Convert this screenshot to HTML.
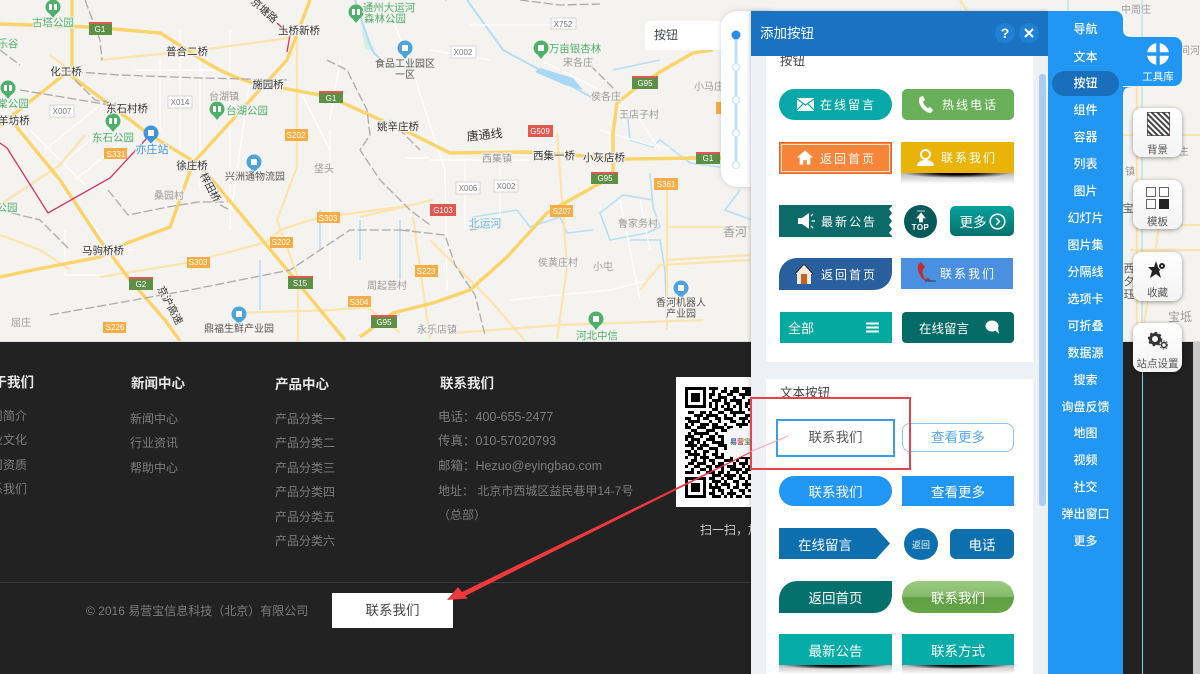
<!DOCTYPE html>
<html lang="zh">
<head>
<meta charset="utf-8">
<title>添加按钮</title>
<style>
html,body{margin:0;padding:0;background:#222}
body{width:1200px;height:674px;overflow:hidden;position:relative;font-family:"Liberation Sans","Noto Sans CJK SC",sans-serif}
.a{position:absolute;box-sizing:border-box}
svg{position:absolute;display:block}
.map text{font-size:10px;fill:#777;paint-order:stroke;stroke:#f5f4f1;stroke-width:2px;text-anchor:middle}
.map .b{fill:#333;font-size:10.5px}
.map .g{fill:#4fae6a;font-size:10.5px}
.map .c{fill:#999;font-size:10px}
.map .s{font-size:8px;stroke:none;fill:#fff}
.map .w{font-size:8px;stroke:none;fill:#777}
.ft{color:#7d7d7d;font-size:12px;line-height:16px;white-space:nowrap}
.fh{color:#e8e8e8;font-size:13.5px;font-weight:bold;line-height:18px;white-space:nowrap}
.nav{left:1048px;width:75px;text-align:center;color:#fff;font-size:12px;line-height:16px;font-weight:500}
.btn{color:#fff;font-size:13.5px;display:flex;align-items:center;justify-content:center;white-space:nowrap}
.ls{font-size:12px;letter-spacing:2px;justify-content:flex-start}
.sb{left:1133px;width:49px;height:49px;border-radius:9px;box-shadow:0 1px 5px rgba(0,0,0,.4);background:linear-gradient(#fff,#f3f3f3)}
.sb span{position:absolute;left:0;width:100%;text-align:center;font-size:10.5px;color:#555;line-height:14px;white-space:nowrap}
.shadow{height:11px;background:radial-gradient(ellipse 48% 45% at 50% 0,#000 35%,rgba(0,0,0,0) 100%),linear-gradient(#bbb,#fff)}
</style>
</head>
<body>

<!-- Map -->
<svg class="map" style="left:0;top:0;filter:blur(.3px)" width="1200" height="341" viewBox="0 0 1200 341">
<rect width="1200" height="341" fill="#f4f3f0"/>
<path d="M360 20l15 30-10 0z" fill="#d5efe5"/>
<path d="M355 0q10 30 15 45t25 20l20 5M467 0l36 50 37 20 33 17 20 11" fill="none" stroke="#b3dcf6" stroke-width="2"/>
<path d="M540 68L573 78 583 90 565 85 535 72z" fill="#a9d8f5"/>
<path d="M613 70l47-10M627 110l3 30 23 7 7-7 30 23 30 4M650 173l3 34 7 20-13 6-37 7-10-27 23-18 30 5M517 210l13 17 30-10 7 16 26-3M473 217l44-7M630 240l30 0 5 30 2 60M740 190l-15 20 40 15M360 220v40M400 220v60M320 210v40M260 260v50" fill="none" stroke="#b7def7" stroke-width="1.6"/>
<g fill="none" stroke="#fff" stroke-width="1.4" opacity=".85">
<path d="M30 130l60 60M45 150l55-45M60 165l55-45M75 180l55-45M65 230v45h60M90 220l20 30M95 250h40M135 70h80M160 60v70M180 30v120M200 50v140M230 30v200M250 80l-20 140M300 90l30 60v130M330 130v150M340 60l-10 60M390 15l20 45 15 50 20 60 2 120M430 50l60 10M470 25h85M540 60l60 30 40 30 20 30M430 160h100M430 158h-25M465 160v70M500 160v60M600 130l50 15 20 3M640 200l10 50M640 300l-20-100M510 300l100-10 40-10"/>
</g>
<g fill="none" stroke="#fde3ac" stroke-width="2.2">
<path d="M297 33v134l-20 53 21 57v64M100 277l87-14 80-21 13-12 37-12 83-11M233 313l100-3 34-3 33 26M453 333l107-8 143-5M557 133l10 134-10 72M667 180v150M667 227h83M667 260l83-5M360 217l73-17M413 217l17 122M100 60l100-10 90-12M0 205l60-40 25-30M0 235l40 15 30 20M50 55l20 15M960 0l20 30 30 10M640 290l20-25 90-5M430 240l60 60 60 70M1137 85v255M1123 135h12M1160 220l-20 130M1130 250h70M1180 135h20M1180 225h20"/>
</g>
<g fill="none" stroke="#fbd36b" stroke-width="3.4">
<path d="M0 24l90 3 70 6c30 17 50 37 90 49l80 15 55 25 25 11 40 20 77-1 100 7 70-1h30"/>
<path d="M15 125l45 55 40 60 30 40 35 40 15 21"/>
<path d="M0 125l60-47-2 0M72 0v77M70 75l80 60 50 30 93 112 52 63"/>
<path d="M310 0l-23 60-94 103-23 64-43 16-27 14-67 13-33 7"/>
<path d="M360 337l33-24 40-10 37-13 37-33 40-44 46-26 20-10v-44l4-30 20-16 23-15 33-19 20-3"/>
</g>
<g fill="none" stroke="#aaa" stroke-width="1.3" stroke-dasharray="9 3">
<path d="M85 0l15 40 2 20M0 50l20 15M50 70l70 5 80 3 90 2M20 90l90 15M75 80l20 20 30 5M108 190l20 25 40-8 30-5 30 0M0 210l40 10 30 30M220 205l10 5M50 315l140-25 100-20 60-40 60 0M327 60l20 10 20 40 3 25-10 15 20 30 30 30 20 15M445 0l30-12M520 0l40 5 40-1M590 65l30 30M390 120l30 30M470 230l30-5M400 230l45 5 10 30 20 30 10 40"/>
</g>
<path d="M0 143l7 5 41 65 62-35 37-40M277 23l13 12-3 17" fill="none" stroke="#d6336c" stroke-width="1.3"/>

<!-- shields -->
<g fill="#5d8f46">
<rect x="89" y="23" width="23" height="12"/><rect x="319" y="91" width="24" height="12"/>
<rect x="129" y="278" width="24" height="12"/><rect x="288" y="277" width="25" height="12"/>
<rect x="371" y="316" width="26" height="12"/><rect x="632" y="78" width="26" height="11"/>
<rect x="591" y="173" width="27" height="11"/><rect x="696" y="152" width="24" height="12"/>
</g>
<g fill="#e2574f">
<rect x="89" y="22" width="23" height="2"/><rect x="319" y="91" width="24" height="2"/>
<rect x="129" y="277" width="24" height="2"/><rect x="288" y="276" width="25" height="2"/>
<rect x="371" y="315" width="26" height="2"/><rect x="632" y="76" width="26" height="2"/>
<rect x="591" y="172" width="27" height="2"/><rect x="696" y="152" width="24" height="2"/>
<rect x="528" y="125" width="25" height="12"/><rect x="430" y="204" width="26" height="12"/>
</g>
<g fill="#f7ad43">
<rect x="104" y="148" width="23" height="11"/><rect x="285" y="129" width="23" height="12"/>
<rect x="317" y="212" width="23" height="11"/><rect x="270" y="237" width="23" height="11"/>
<rect x="187" y="257" width="23" height="11"/><rect x="348" y="296" width="23" height="11"/>
<rect x="103" y="322" width="23" height="11"/><rect x="654" y="178" width="24" height="12"/>
<rect x="550" y="205" width="23" height="12"/><rect x="415" y="265" width="23" height="12"/>
<rect x="716" y="102" width="12" height="12"/>
</g>
<g fill="#fff" stroke="#ccc" stroke-width=".8">
<rect x="50" y="105" width="24" height="12"/><rect x="168" y="96" width="24" height="12"/>
<rect x="451" y="46" width="25" height="12"/><rect x="551" y="18" width="25" height="11"/>
<rect x="456" y="182" width="24" height="12"/><rect x="494" y="180" width="24" height="12"/>
</g>
<text class="s" x="100" y="32">G1</text><text class="s" x="331" y="101">G1</text><text class="s" x="141" y="287">G2</text><text class="s" x="300" y="286">S15</text><text class="s" x="384" y="325">G95</text><text class="s" x="645" y="86">G95</text><text class="s" x="605" y="181">G95</text><text class="s" x="708" y="161">G1</text><text class="s" x="540" y="134">G509</text><text class="s" x="443" y="213">G103</text>
<text class="s" x="116" y="157">S331</text><text class="s" x="296" y="138">S202</text><text class="s" x="328" y="221">S303</text><text class="s" x="281" y="245">S202</text><text class="s" x="198" y="265">S303</text><text class="s" x="359" y="305">S304</text><text class="s" x="115" y="330">S226</text><text class="s" x="666" y="187">S361</text><text class="s" x="562" y="214">S207</text><text class="s" x="426" y="274">S223</text>
<text class="w" x="62" y="114">X007</text><text class="w" x="180" y="105">X014</text><text class="w" x="463" y="55">X002</text><text class="w" x="563" y="27">X752</text><text class="w" x="468" y="191">X006</text><text class="w" x="506" y="189">X002</text>

<!-- pins -->
<g fill="#4fb06c">
<circle cx="53" cy="7" r="7.5"/><circle cx="8" cy="88" r="7.5"/><circle cx="113" cy="121" r="7.5"/><circle cx="217" cy="109" r="7.5"/><circle cx="356" cy="12" r="7.5"/><circle cx="541" cy="48" r="7.5"/><circle cx="596" cy="319" r="7.5"/>
<path d="M49 13l4 5 4-5zM4 94l4 5 4-5zM109 127l4 5 4-5zM213 115l4 5 4-5zM352 18l4 5 4-5zM537 54l4 5 4-5zM592 325l4 5 4-5z"/>
</g>
<g fill="#4da3dc">
<circle cx="254" cy="162" r="7.5"/><circle cx="239" cy="314" r="7.5"/><circle cx="405" cy="48" r="7.5"/><circle cx="681" cy="288" r="7.5"/>
<path d="M250 168l4 5 4-5zM235 320l4 5 4-5zM401 54l4 5 4-5zM677 294l4 5 4-5z"/>
</g>
<circle cx="151" cy="133" r="7.5" fill="#3f95dd"/>
<path d="M147 139l4 5 4-5z" fill="#3f95dd"/>
<g fill="#fff"><rect x="49" y="4" width="3" height="6"/><rect x="54" y="4" width="3" height="6"/><rect x="4" y="85" width="3" height="6"/><rect x="9" y="85" width="3" height="6"/><rect x="109" y="118" width="3" height="6"/><rect x="114" y="118" width="3" height="6"/><rect x="213" y="106" width="3" height="6"/><rect x="218" y="106" width="3" height="6"/><rect x="352" y="9" width="3" height="6"/><rect x="357" y="9" width="3" height="6"/><rect x="538" y="45" width="6" height="6"/><rect x="593" y="316" width="6" height="6"/><rect x="251" y="159" width="6" height="6"/><rect x="236" y="311" width="6" height="6"/><rect x="402" y="45" width="6" height="6"/><rect x="678" y="285" width="6" height="6"/><rect x="148" y="130" width="6" height="6"/></g>

<!-- labels -->
<text class="g" x="53" y="26">古塔公园</text><text class="g" x="8" y="47">乐谷</text><text class="g" x="13" y="107">棠公园</text><text class="g" x="113" y="141">东石公园</text><text class="g" x="7" y="211">公园</text><text class="g" x="247" y="114">台湖公园</text>
<text class="b" x="187" y="55">普合二桥</text><text class="b" x="66" y="75">化工桥</text><text class="b" x="127" y="112">东石村桥</text><text class="b" x="14" y="124">羊坊桥</text><text class="b" x="192" y="169">徐庄桥</text><text class="b" x="268" y="88">施园桥</text><text class="b" x="299" y="34">土桥新桥</text><text class="b" x="103" y="254">马驹桥桥</text><text class="b" x="398" y="130">姚辛庄桥</text><text class="b" x="554" y="159">西集一桥</text><text class="b" x="604" y="161">小灰店桥</text>
<text class="b" x="262" y="13" transform="rotate(42 262 13)">京塘路</text>
<text class="b" x="207" y="189" transform="rotate(62 207 189)">梓田桥</text>
<text class="b" x="167" y="307" transform="rotate(62 167 307)">京沪高速</text>
<text class="b" x="485" y="139" transform="rotate(-6 485 139)" style="font-size:12px">唐通线</text>
<text x="255" y="180" style="font-size:10px;fill:#555">兴洲通物流园</text><text x="239" y="332" style="font-size:10px;fill:#555">鼎福生鲜产业园</text>
<text x="405" y="67" style="font-size:10px;fill:#555">食品工业园区</text><text x="405" y="78" style="font-size:10px;fill:#555">一区</text>
<text x="681" y="306" style="font-size:10px;fill:#555">香河机器人</text><text x="681" y="317" style="font-size:10px;fill:#555">产业园</text>
<text class="g" x="389" y="11">通州大运河</text><text class="g" x="385" y="22">森林公园</text>
<text class="g" x="575" y="52">万亩银杏林</text><text class="g" x="597" y="339">河北中信</text>
<text x="152" y="153" style="fill:#3f95dd;font-size:11px">亦庄站</text>
<text class="c" x="224" y="100">台湖镇</text><text class="c" x="169" y="199">桑园村</text><text class="c" x="324" y="172">垡头</text><text class="c" x="387" y="289">周起营村</text><text class="c" x="21" y="326">屈庄</text><text class="c" x="578" y="66">宋各庄</text><text class="c" x="606" y="100">侯各庄</text><text class="c" x="639" y="118">王店子村</text><text class="c" x="497" y="162">西集镇</text><text class="c" x="638" y="227">鲁家务村</text><text class="c" x="558" y="266">侯黄庄村</text><text class="c" x="603" y="270">小屯</text><text class="c" x="437" y="333">永乐店镇</text><text class="c" x="709" y="90">小马庄</text><text class="c" x="1136" y="13">中周庄</text><text class="c" x="1190" y="54">间河</text><text class="c" x="1184" y="155">主</text><text class="c" x="1130" y="175">镇</text>
<text x="485" y="227" style="fill:#6fb4e8;font-size:11px">北运河</text>
<text x="735" y="236" style="font-size:12px;fill:#999">香河</text>
<text x="1180" y="321" style="font-size:12px;fill:#999">宝坻</text>
<text x="1128" y="212" style="font-size:11px;fill:#555">宝</text>
<text x="1129" y="272" style="font-size:11px;fill:#555">西</text><text x="1129" y="285" style="font-size:11px;fill:#555">夕</text><text x="1129" y="298" style="font-size:11px;fill:#555">珏</text>
<path d="M1142 0v341M1068 0v12" stroke="#9fdfe6" stroke-width="1"/>
</svg>

<!-- Footer -->
<div class="a" style="left:0;top:341px;width:1200px;height:333px;background:#222;border-top:1px solid #ddd"></div>
<div class="a" style="left:1193px;top:342px;width:7px;height:332px;background:#c9c9c9"></div>
<div class="a" style="left:1142px;top:342px;width:1px;height:332px;background:#7fd3d8"></div>
<div class="a" style="left:0;top:582px;width:751px;height:1px;background:#3b3b3b"></div>

<div class="a fh" style="left:-20px;top:374px">关于我们</div>
<div class="a ft" style="left:-21px;top:408px">公司简介</div>
<div class="a ft" style="left:-21px;top:432px">企业文化</div>
<div class="a ft" style="left:-21px;top:457px">公司资质</div>
<div class="a ft" style="left:-21px;top:481px">联系我们</div>

<div class="a fh" style="left:131px;top:375px">新闻中心</div>
<div class="a ft" style="left:130px;top:411px">新闻中心</div>
<div class="a ft" style="left:130px;top:435px">行业资讯</div>
<div class="a ft" style="left:130px;top:460px">帮助中心</div>

<div class="a fh" style="left:275px;top:376px">产品中心</div>
<div class="a ft" style="left:275px;top:411px">产品分类一</div>
<div class="a ft" style="left:275px;top:435px">产品分类二</div>
<div class="a ft" style="left:275px;top:460px">产品分类三</div>
<div class="a ft" style="left:275px;top:484px">产品分类四</div>
<div class="a ft" style="left:275px;top:509px">产品分类五</div>
<div class="a ft" style="left:275px;top:533px">产品分类六</div>

<div class="a fh" style="left:440px;top:375px">联系我们</div>
<div class="a ft" style="left:438px;top:409px;font-size:12.5px">电话：400-655-2477</div>
<div class="a ft" style="left:438px;top:433px;font-size:12.5px">传真：010-57020793</div>
<div class="a ft" style="left:438px;top:458px;font-size:12.5px">邮箱：Hezuo@eyingbao.com</div>
<div class="a ft" style="left:438px;top:483px;font-size:12px">地址： 北京市西城区益民巷甲14-7号</div>
<div class="a ft" style="left:438px;top:507px;font-size:12px">（总部）</div>

<div class="a" style="left:676px;top:377px;width:75px;height:130px;background:#fff"></div>
<svg style="left:685px;top:387px" width="66" height="111" viewBox="0 0 22 37" shape-rendering="crispEdges">
<path stroke="#000" stroke-width="1" fill="none" d="M0 .5h7M0 1.5h1M6 1.5h1M0 2.5h1M2 2.5h3M6 2.5h1M0 3.5h1M2 3.5h3M6 3.5h1M0 4.5h1M2 4.5h3M6 4.5h1M0 5.5h1M6 5.5h1M0 6.5h7
M8 .5h3M13 .5h1M16 .5h2M19 .5h3M9 1.5h1M12 1.5h2M15 1.5h3M20 1.5h2M8 2.5h2M11 2.5h1M14 2.5h2M18 2.5h4M8 3.5h1M11 3.5h3M16 3.5h1M19 3.5h1M9 4.5h3M13 4.5h1M15 4.5h4M21 4.5h1M8 5.5h1M10 5.5h1M13 5.5h2M17 5.5h2M20 5.5h2M8 6.5h1M10 6.5h1M12 6.5h1M14 6.5h1M16 6.5h1M18 6.5h1M20 6.5h1
M9 7.5h2M13 7.5h3M18 7.5h1M21 7.5h1M1 8.5h2M5 8.5h2M8 8.5h1M11 8.5h2M15 8.5h5M3 9.5h3M7 9.5h4M13 9.5h1M16 9.5h1M20 9.5h2M0 10.5h2M4 10.5h1M6 10.5h2M10 10.5h2M13 10.5h3M18 10.5h3M1 11.5h4M8 11.5h1M11 11.5h1M15 11.5h2M19 11.5h1M21 11.5h1M0 12.5h1M2 12.5h1M5 12.5h3M9 12.5h2M13 12.5h1M17 12.5h4M0 13.5h2M4 13.5h3M9 13.5h4M14 13.5h2M18 13.5h1M2 14.5h2M7 14.5h3M12 14.5h2M15 14.5h1M1 15.5h1M3 15.5h5M10 15.5h1M14 15.5h3M0 16.5h3M5 16.5h1M8 16.5h2M11 16.5h2M15 16.5h1M0 17.5h1M2 17.5h3M7 17.5h3M12 17.5h1M14 17.5h1M1 18.5h2M4 18.5h1M6 18.5h1M9 18.5h4M0 19.5h4M5 19.5h3M11 19.5h3M15 19.5h1M2 20.5h1M4 20.5h2M8 20.5h3M13 20.5h2M0 21.5h2M3 21.5h1M6 21.5h2M10 21.5h1M14 21.5h4M1 22.5h4M6 22.5h1M9 22.5h2M12 22.5h1M16 22.5h2M20 22.5h1M0 23.5h1M3 23.5h1M5 23.5h3M10 23.5h3M15 23.5h1M18 23.5h4M2 24.5h2M6 24.5h1M8 24.5h2M13 24.5h3M17 24.5h1M20 24.5h1M1 25.5h2M4 25.5h3M9 25.5h1M11 25.5h2M16 25.5h1M18 25.5h3M0 26.5h1M3 26.5h2M7 26.5h2M10 26.5h3M14 26.5h3M19 26.5h1M21 26.5h1M2 27.5h1M5 27.5h2M8 27.5h1M12 27.5h1M15 27.5h4M20 27.5h2M0 28.5h3M4 28.5h1M7 28.5h3M11 28.5h2M14 28.5h1M17 28.5h1M19 28.5h2M9 29.5h3M13 29.5h4M18 29.5h1M21 29.5h1
M0 30.5h7M0 31.5h1M6 31.5h1M0 32.5h1M2 32.5h3M6 32.5h1M0 33.5h1M2 33.5h3M6 33.5h1M0 34.5h1M2 34.5h3M6 34.5h1M0 35.5h1M6 35.5h1M0 36.5h7
M8 30.5h2M12 30.5h1M14 30.5h2M18 30.5h2M21 30.5h1M9 31.5h3M13 31.5h1M16 31.5h2M20 31.5h1M8 32.5h1M10 32.5h1M12 32.5h3M17 32.5h1M19 32.5h3M8 33.5h4M14 33.5h1M16 33.5h2M20 33.5h1M9 34.5h1M11 34.5h2M15 34.5h1M18 34.5h2M21 34.5h1M8 35.5h2M12 35.5h1M14 35.5h3M19 35.5h1M9 36.5h3M13 36.5h1M15 36.5h1M17 36.5h2M20 36.5h2"/>
</svg>
<div class="a" style="left:727px;top:428px;width:30px;height:29px;background:#f6f6f6;border-radius:5px;font-size:7px;line-height:29px;padding-left:3px;color:#3c5a8c;white-space:nowrap;font-weight:bold">易<span style="color:#c0504d">营</span><span style="color:#5a9a5a">宝</span></div>
<div class="a" style="left:700px;top:522px;color:#ccc;font-size:12px;line-height:16px;white-space:nowrap">扫一扫，加</div>

<div class="a ft" style="left:86px;top:603px;font-size:12px">© 2016 易营宝信息科技（北京）有限公司</div>
<div class="a" style="left:332px;top:593px;width:121px;height:35px;background:#fff;color:#444;font-size:13.5px;line-height:36px;text-align:center">联系我们</div>

<!-- Slider -->
<div class="a" style="left:645px;top:21px;width:78px;height:29px;background:#fff;border-radius:5px;color:#445;font-size:12px;line-height:29px;padding-left:9px">按钮</div>
<svg style="left:715px;top:25px" width="14" height="22"><path d="M5 0L13 11 5 22z" fill="#fff"/></svg>
<div class="a" style="left:721px;top:11px;width:60px;height:176px;background:#fff;border-radius:16px;box-shadow:0 0 6px rgba(0,0,0,.15)"></div>
<svg style="left:726px;top:25px" width="20" height="150">
<path d="M10 10v130" stroke="#bfe0fb" stroke-width="3"/>
<circle cx="10" cy="10" r="4.5" fill="#2a8be8"/>
<g fill="#fff" stroke="#cfe6fb" stroke-width="1.5"><circle cx="10" cy="42" r="3.5"/><circle cx="10" cy="75" r="3.5"/><circle cx="10" cy="108" r="3.5"/><circle cx="10" cy="140" r="3.5"/></g>
</svg>

<!-- Panel -->
<div class="a" style="left:751px;top:11px;width:297px;height:663px;background:#edf1f6;box-shadow:-1px 0 4px rgba(0,0,0,.2)"></div>
<div class="a" style="left:766px;top:56px;width:267px;height:306px;background:#fff"></div>
<div class="a" style="left:766px;top:379px;width:267px;height:295px;background:#fff"></div>
<div class="a" style="left:1039px;top:74px;width:7px;height:432px;background:#a9cdf0;border-radius:3px"></div>
<div class="a" style="left:780px;top:53px;font-size:12.5px;line-height:16px;color:#444">按钮</div>
<div class="a" style="left:780px;top:385px;font-size:12.5px;line-height:16px;color:#444">文本按钮</div>

<div class="a" style="left:751px;top:11px;width:297px;height:45px;background:#1a73c2;color:#fff;font-size:13.5px;line-height:45px;padding-left:9px">添加按钮</div>
<div class="a" style="left:995px;top:23px;width:20px;height:20px;border-radius:50%;background:#2080d4;color:#fff;font-size:14px;font-weight:bold;line-height:20px;text-align:center">?</div>
<div class="a" style="left:1019px;top:23px;width:20px;height:20px;border-radius:50%;background:#2080d4"></div>
<svg style="left:1024px;top:28px" width="10" height="10"><path d="M1 1l8 8M9 1l-8 8" stroke="#fff" stroke-width="2"/></svg>

<!-- Buttons card 1 -->
<div class="a btn ls" style="left:779px;top:89px;width:113px;height:31px;background:#09a8a8;border-radius:16px;padding-left:41px">在线留言</div>
<svg style="left:797px;top:98px" width="17" height="13"><rect width="17" height="13" fill="#fff"/><path d="M0 1l8.5 6 8.5-6M0 12l6-6M17 12l-6-6" stroke="#09a8a8" fill="none" stroke-width="1.2"/></svg>
<div class="a btn ls" style="left:902px;top:89px;width:112px;height:31px;background:#6ab05a;border-radius:5px;padding-left:40px">热线电话</div>
<svg style="left:918px;top:96px" width="17" height="17" viewBox="0 0 17 17"><path d="M2 1l3-1 2 4-2 2c1 3 3 5 5 6l2-1 3 3-1 2c-1 1-3 1-5 0C5 14 2 10 1 6 1 4 1 2 2 1z" fill="#fff"/></svg>

<div class="a btn ls" style="left:779px;top:142px;width:113px;height:32px;background:#f6853a;border:2px solid #f6853a;outline:1px solid #e8632b;outline-offset:-1px;box-shadow:inset 0 0 0 1px #ffe2c9;padding-left:39px">返回首页</div>
<svg style="left:797px;top:150px" width="16" height="15" viewBox="0 0 18 16"><path d="M9 0L0 8h3v8h4v-5h4v5h4V8h3z" fill="#fff"/></svg>
<div class="a btn ls" style="left:901px;top:142px;width:113px;height:31px;background:#eab308;padding-left:40px">联系我们</div>
<div class="a shadow" style="left:901px;top:173px;width:113px"></div>
<svg style="left:917px;top:148px" width="17" height="18" viewBox="0 0 17 18"><circle cx="8.5" cy="6.500" r="5.500" fill="#fff"/><circle cx="8.500" cy="6.500" r="3.500" fill="#eab308"/><path d="M0 18c0-4 4-6 8.500-6S17 14 17 18z" fill="#fff"/></svg>

<div class="a btn ls" style="left:779px;top:205px;width:113px;height:32px;background:#0c6b68;padding-left:42px">最新公告</div>
<svg style="left:886px;top:205px" width="7" height="32"><path d="M7 0L3 4 6 8 3 12 6 16 3 20 6 24 3 28 7 32z" fill="#fff"/></svg>
<svg style="left:798px;top:213px" width="18" height="16" viewBox="0 0 18 16"><path d="M0 5h4l7-5v16L4 11H0z" fill="#fff"/><path d="M13 3l2-2M13.500 8H17M13 13l2 2" stroke="#fff" stroke-width="1.300"/></svg>
<div class="a" style="left:904px;top:205px;width:33px;height:33px;border-radius:50%;background:#07595a"></div>
<svg style="left:913px;top:210px" width="16" height="13"><path d="M4 1h8M8 3L4 8h2.500v4h3V8H12z" stroke="#fff" stroke-width=".8" fill="#fff"/></svg>
<div class="a" style="left:904px;top:222px;width:33px;text-align:center;color:#fff;font-size:8px;font-weight:bold;line-height:12px;letter-spacing:.5px">TOP</div>
<div class="a btn" style="left:950px;top:206px;width:64px;height:30px;background:linear-gradient(#0aa29e,#05706c);border-radius:5px;font-size:13.5px;padding-right:18px">更多</div>
<svg style="left:989px;top:213px" width="17" height="17"><circle cx="8.500" cy="8.500" r="7.300" fill="none" stroke="#fff" stroke-width="1.500"/><path d="M7 5l3.500 3.500L7 12" fill="none" stroke="#fff" stroke-width="1.500"/></svg>

<div class="a btn ls" style="left:779px;top:258px;width:113px;height:32px;background:#2a5f9e;border-radius:18px 0 18px 0;padding-left:42px">返回首页</div>
<svg style="left:795px;top:264px" width="18" height="20" viewBox="0 0 18 20"><path d="M9 0L0 10h2v10h14V10h2z" fill="#f4ead8"/><rect x="6" y="10" width="6" height="10" fill="#c8602a"/><path d="M9 0L0 10M9 0l9 10" stroke="#333" stroke-width="1.200"/></svg>
<div class="a btn ls" style="left:901px;top:258px;width:112px;height:31px;background:#4a8fe0;padding-left:39px">联系我们</div>
<svg style="left:917px;top:262px" width="20" height="22" viewBox="0 0 20 22"><path d="M4 0L1 3c-1 6 2 13 8 16l7 1-5-4-3 1C6 14 5 10 6 7l2-2z" fill="#c62b2b"/><path d="M8 19h11" stroke="#2f5a9a" stroke-width="1.500"/></svg>

<div class="a btn" style="left:780px;top:312px;width:112px;height:31px;background:#04a9a0;font-size:13px;justify-content:flex-start;padding-left:8px">全部</div>
<svg style="left:866px;top:322px" width="13" height="11"><path d="M0 1.500h13M0 5.500h13M0 9.500h13" stroke="#fff" stroke-width="2"/></svg>
<div class="a btn" style="left:902px;top:312px;width:112px;height:31px;background:#056b66;border-radius:4px;font-size:12.5px;justify-content:flex-start;padding-left:17px">在线留言</div>
<svg style="left:985px;top:320px" width="15" height="15" viewBox="0 0 15 15"><ellipse cx="7" cy="6" rx="6.500" ry="5.500" fill="#fff"/><path d="M9 9l5 5-1-6z" fill="#fff"/></svg>

<!-- Text buttons card 2 -->
<div class="a" style="left:776px;top:419px;width:119px;height:38px;border:2px solid #3d9be9;background:#fff;color:#555;font-size:13.5px;line-height:34px;text-align:center">联系我们</div>
<div class="a" style="left:902px;top:423px;width:112px;height:29px;border:1.5px solid #8fc4f5;border-radius:8px;background:#fff;color:#5aa9ef;font-size:13.5px;line-height:27px;text-align:center">查看更多</div>
<div class="a btn" style="left:779px;top:476px;width:113px;height:30px;background:#2196f3;border-radius:15px">联系我们</div>
<div class="a btn" style="left:902px;top:476px;width:112px;height:30px;background:#2196f3">查看更多</div>
<svg style="left:779px;top:528px" width="112" height="31"><path d="M0 0H97L111 15.500 97 31H0z" fill="#0d6fad"/></svg>
<div class="a btn" style="left:779px;top:528px;width:100px;height:31px;justify-content:flex-start;padding-left:19px">在线留言</div>
<div class="a btn" style="left:904px;top:528px;width:34px;height:32px;border-radius:50%;background:#0d6fad;font-size:9px">返回</div>
<div class="a btn" style="left:950px;top:529px;width:64px;height:30px;background:#0d6fad;border-radius:6px">电话</div>
<div class="a btn" style="left:779px;top:581px;width:113px;height:32px;background:#05706c;border-radius:18px 0 18px 0">返回首页</div>
<div class="a btn" style="left:902px;top:581px;width:112px;height:32px;border-radius:16px;background:linear-gradient(#9ccb82 0,#86bb6c 48%,#5d9e41 52%,#66a848 100%)">联系我们</div>
<div class="a btn" style="left:779px;top:634px;width:113px;height:31px;background:#05aca8">最新公告</div>
<div class="a shadow" style="left:779px;top:665px;width:113px;height:9px"></div>
<div class="a btn" style="left:902px;top:634px;width:112px;height:31px;background:#05aca8">联系方式</div>
<div class="a shadow" style="left:902px;top:665px;width:112px;height:9px"></div>

<!-- Red highlight + arrow -->
<div class="a" style="left:750px;top:397px;width:161px;height:73px;border:2.5px solid #e8424a"></div>
<svg style="left:0;top:0" width="1200" height="674">
<path d="M788 436L750 452" stroke="#f4a9ac" stroke-width="1"/>
<path d="M751 451.500L462 592 458 587 447 600 468 598.500 465 596 751 452.500z" fill="#ee3a3d"/>
</svg>

<!-- Nav -->
<div class="a" style="left:1048px;top:11px;width:75px;height:663px;background:#2196f3;border-radius:0 8px 0 0"></div>
<div class="a" style="left:1123px;top:37px;width:59px;height:49px;background:#2196f3;border-radius:0 8px 8px 0"></div>
<svg style="left:1123px;top:27px" width="10" height="70"><path d="M0 0C0 8 2 10 10 10H0zM0 70C0 62 2 60 10 60H0z" fill="#2196f3"/></svg>
<div class="a" style="left:1052px;top:71px;width:67px;height:25px;background:#1a6fbd;border-radius:13px"></div>
<div class="a nav" style="top:21px">导航</div>
<div class="a nav" style="top:49px">文本</div>
<div class="a nav" style="top:75px">按钮</div>
<div class="a nav" style="top:102px">组件</div>
<div class="a nav" style="top:129px">容器</div>
<div class="a nav" style="top:156px">列表</div>
<div class="a nav" style="top:183px">图片</div>
<div class="a nav" style="top:210px">幻灯片</div>
<div class="a nav" style="top:237px">图片集</div>
<div class="a nav" style="top:264px">分隔线</div>
<div class="a nav" style="top:291px">选项卡</div>
<div class="a nav" style="top:318px">可折叠</div>
<div class="a nav" style="top:345px">数据源</div>
<div class="a nav" style="top:372px">搜索</div>
<div class="a nav" style="top:399px">询盘反馈</div>
<div class="a nav" style="top:425px">地图</div>
<div class="a nav" style="top:452px">视频</div>
<div class="a nav" style="top:479px">社交</div>
<div class="a nav" style="top:506px">弹出窗口</div>
<div class="a nav" style="top:533px">更多</div>

<svg style="left:1147px;top:43px" width="22" height="22"><circle cx="11" cy="11" r="11" fill="#fff"/><path d="M11 0v22M0 11h22" stroke="#2196f3" stroke-width="3.500"/></svg>
<div class="a" style="left:1123px;top:70px;width:70px;color:#fff;font-size:10.5px;line-height:14px;text-align:center">工具库</div>

<!-- Side buttons -->
<div class="a sb" style="top:108px"><span style="top:35px">背景</span></div>
<svg style="left:1147px;top:112px" width="23" height="24"><defs><pattern id="hp" width="4" height="4" patternUnits="userSpaceOnUse" patternTransform="rotate(45)"><rect width="4" height="4" fill="#fff"/><rect width="4" height="2" fill="#444"/></pattern></defs><rect width="23" height="24" fill="url(#hp)" stroke="#444" stroke-width="1.500"/></svg>
<div class="a sb" style="top:180px"><span style="top:35px">模板</span></div>
<svg style="left:1146px;top:187px" width="24" height="22"><g fill="none" stroke="#666" stroke-width="1"><rect x=".5" y=".5" width="9" height="9"/><rect x="13.500" y=".5" width="9" height="9"/><rect x=".5" y="12.500" width="9" height="9"/></g><rect x="13" y="12" width="10" height="10" fill="#222"/></svg>
<div class="a sb" style="top:252px"><span style="top:34px">收藏</span></div>
<svg style="left:1148px;top:261px" width="20" height="18" viewBox="0 0 20 18"><path d="M8 0l2 6h6l-5 4 2 7-5-4-6 4 2-7-4-4h6z" fill="#222"/><circle cx="14" cy="5" r="3.500" fill="#222" stroke="#fff"/><circle cx="14" cy="5" r="1" fill="#fff"/></svg>
<div class="a sb" style="top:323px"><span style="top:34px">站点设置</span></div>
<svg style="left:1148px;top:332px" width="20" height="18" viewBox="0 0 20 18"><circle cx="7" cy="7" r="4.500" fill="none" stroke="#333" stroke-width="3"/><circle cx="7" cy="7" r="6.500" fill="none" stroke="#333" stroke-width="1.500" stroke-dasharray="2.500 2.500"/><circle cx="16" cy="13" r="2.500" fill="none" stroke="#333" stroke-width="1.500"/><circle cx="16" cy="13" r="4" fill="none" stroke="#333" stroke-width="1" stroke-dasharray="1.500 1.500"/></svg>

</body>
</html>
